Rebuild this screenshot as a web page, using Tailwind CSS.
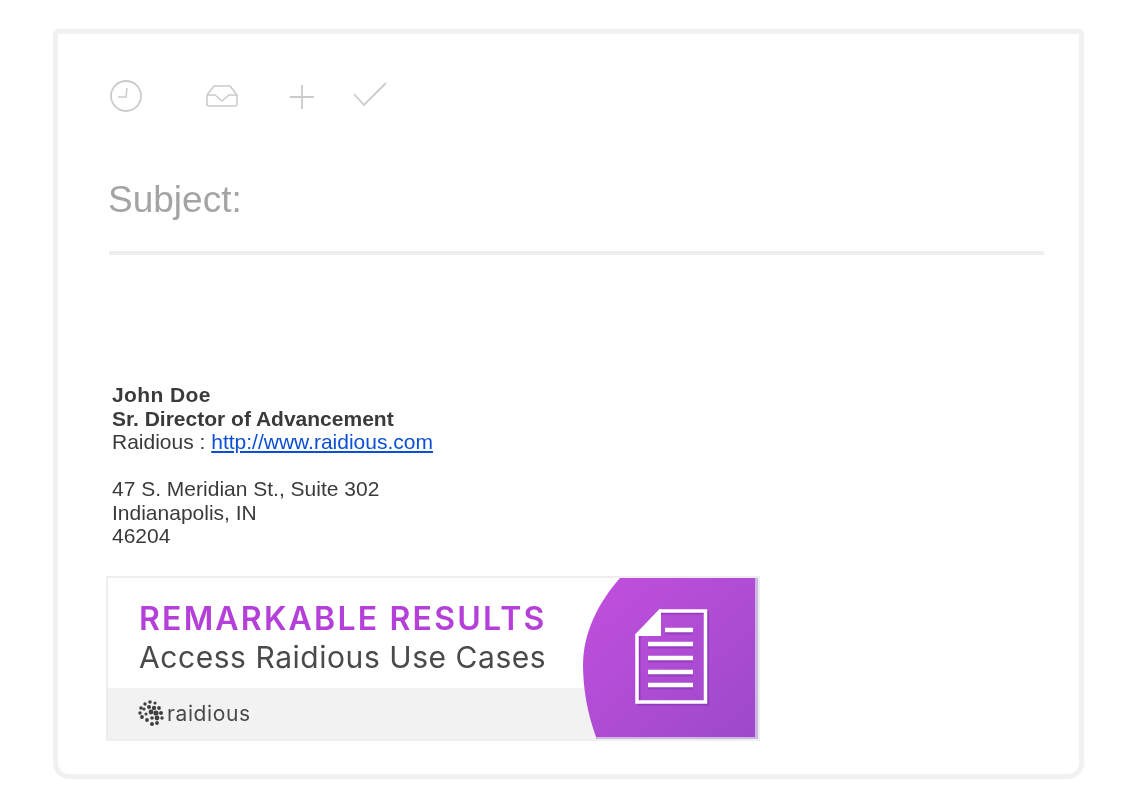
<!DOCTYPE html>
<html lang="en">
<head>
<meta charset="utf-8">
<title>Email signature</title>
<script src="https://cdn.jsdelivr.net/npm/@tailwindcss/browser@4"></script>
</head>
<body class="bg-white font-['Liberation_Sans',Arial,sans-serif]">
<div class="w-[1137px] h-[800px] pt-[29px] pl-[53px] overflow-hidden">
  <div class="w-[1031px] h-[750px] border-[5px] border-[#f1f1f1] rounded-t-[5px] rounded-b-[16px] pl-[51px] pr-[33px] blur-[0.7px]">
    <div class="flex items-center h-[34px] mt-[45px] text-[#c9cccc]">
      <svg class="w-[34px] h-[34px]" viewBox="0 0 34 34" fill="none" stroke="currentColor" stroke-width="1.8"><circle cx="17" cy="17" r="15"/><path d="M18 9l-1 9H9" stroke-width="1.5"/></svg>
      <svg class="w-[34px] h-[24px] ml-[62px]" viewBox="0 0 34 24" fill="none" stroke="currentColor" stroke-width="1.6"><path d="M9 2h16l7 9v9a2 2 0 0 1-2 2H4a2 2 0 0 1-2-2v-9z" stroke-linejoin="round"/><path d="M2 11h8l7 6 7-6h8"/></svg>
      <svg class="w-[26px] h-[26px] ml-[50px] mt-[1px]" viewBox="0 0 26 26" fill="none" stroke="currentColor" stroke-width="1.8"><path d="M13 1v24M1 13h24"/></svg>
      <svg class="w-[36px] h-[26px] ml-[37px] -mt-[5px]" viewBox="0 0 36 26" fill="none" stroke="currentColor" stroke-width="1.8"><path d="M2 13l10 11L34 2"/></svg>
    </div>
    <div class="mt-[65px] -ml-[1px] text-[37px] leading-[44px] text-[#a3a5a5]">Subject:</div>
    <div class="h-[4px] mt-[29px] bg-[#eeeeee] w-[935px]"></div>
    <div class="mt-[128px] ml-[3px] text-[21px] leading-[23.5px] text-[#3a3a3a]">
      <div class="font-bold tracking-[0.4px]">John Doe</div>
      <div class="font-bold">Sr. Director of Advancement</div>
      <div>Raidious : <a href="#" class="text-[#0b4fd6] underline">http://www.raidious.com</a></div>
      <div class="mt-[23.5px]">47 S. Meridian St., Suite 302</div>
      <div>Indianapolis, IN</div>
      <div>46204</div>
    </div>
    <div class="relative w-[654px] h-[165px] mt-[28px] -ml-[3px] border-2 border-[#eeeeee] bg-white overflow-hidden">
      <div class="flex flex-col h-full">
        <div class="h-[110px] pl-[31px] pt-[22px] font-['Inter',sans-serif]">
          <div class="text-[32px] leading-[38px] font-semibold tracking-[2.2px] text-[#b53fd9]">REMARKABLE RESULTS</div>
          <div class="text-[30px] leading-[38px] tracking-[0.55px] text-[#4a4a4a]">Access Raidious Use Cases</div>
        </div>
        <div class="flex-1 flex items-center bg-[#f2f2f2] pl-[29px] gap-[2px]">
          <svg class="w-[28px] h-[28px]" viewBox="0 0 28 28" fill="#3f3f3f"><circle cx="4" cy="9" r="1.8"/><circle cx="8" cy="5" r="1.7"/><circle cx="13" cy="3" r="1.8"/><circle cx="18" cy="4" r="1.6"/><circle cx="3" cy="14" r="1.7"/><circle cx="7" cy="10" r="1.6"/><circle cx="12" cy="8" r="2"/><circle cx="17" cy="9" r="2.2"/><circle cx="22" cy="9" r="1.9"/><circle cx="5" cy="18" r="1.9"/><circle cx="9" cy="15" r="1.5"/><circle cx="14" cy="13" r="2.4"/><circle cx="19" cy="14" r="2.6"/><circle cx="24" cy="14" r="2"/><circle cx="10" cy="21" r="1.9"/><circle cx="15" cy="19" r="1.8"/><circle cx="20" cy="19" r="2.4"/><circle cx="25" cy="19" r="1.7"/><circle cx="15" cy="25" r="2"/><circle cx="20" cy="24" r="1.9"/></svg>
          <span class="font-['Inter',sans-serif] text-[21px] leading-none tracking-[0.6px] text-[#4a4a4a]">raidious</span>
        </div>
      </div>
      <svg class="absolute right-0 top-0 w-[176px] h-[161px]" viewBox="0 0 176 161" fill="none">
        <defs><linearGradient id="g" x1="0" y1="0" x2="1" y2="1"><stop offset="0" stop-color="#c24fdd"/><stop offset="1" stop-color="#9d49cc"/></linearGradient></defs>
        <path d="M38 0H173V159H14C6 137 1 112 1 87C1 55 16 25 38 0Z" fill="url(#g)"/>
        <path d="M173 0H176V161H14V159H173Z" fill="#cdb6e6"/>
        <path d="M79 35H125.5V126H57V59Z" fill="none" stroke="#6f2b9e" stroke-opacity=".45" stroke-width="3"/>
        <path d="M78 33H123.5V124H55V57Z" fill="none" stroke="#fff" stroke-width="3.5"/>
        <path d="M55 57H78V33Z" fill="#fff" stroke="#fff" stroke-width="2"/>
        <path d="M83 54H111M66 68H111M66 82H111M66 96H111M66 109H111" stroke="#7a2fa8" stroke-opacity=".45" stroke-width="5"/>
        <path d="M83 52H111M66 66H111M66 80H111M66 94H111M66 107H111" stroke="#fff" stroke-width="4.5"/>
      </svg>
    </div>
  </div>
</div>
</body>
</html>
